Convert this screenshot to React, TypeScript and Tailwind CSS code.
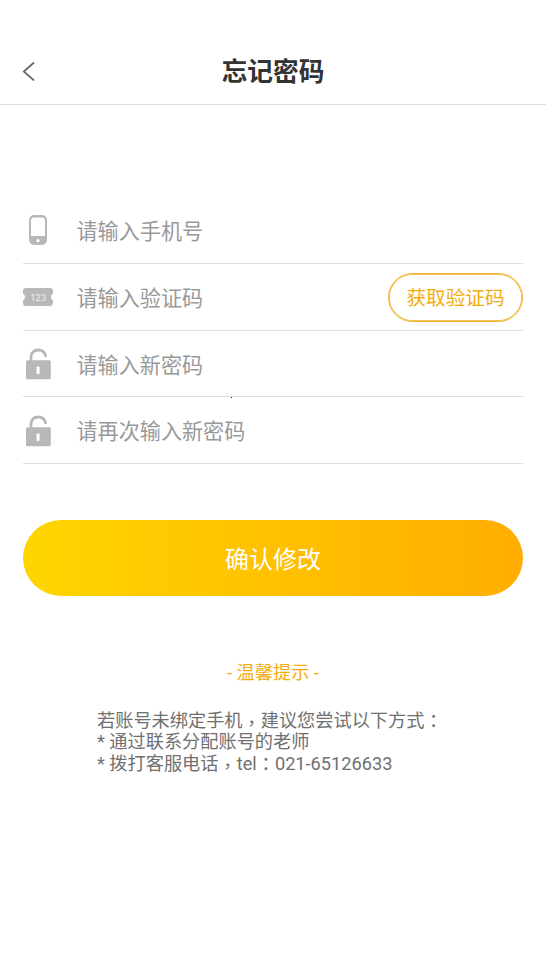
import React from "react";

function PhoneIcon() {
  return (
    <svg width="30" height="32" viewBox="0 0 30 32" className="block">
      <path fillRule="evenodd" d="M11 1h8a5 5 0 0 1 5 5v20a5 5 0 0 1-5 5h-8a5 5 0 0 1-5-5V6a5 5 0 0 1 5-5zM11 3.500a3 3 0 0 0-3 3V22h14V6.500a3 3 0 0 0-3-3z" fill="#b8b8b8" />
      <circle cx="15" cy="26.700" r="1.700" fill="white" />
    </svg>
  );
}

function CodeIcon() {
  return (
    <svg width="30" height="18" viewBox="0 0 30 18" className="block">
      <path d="M3 0h24a3 3 0 0 1 3 3v2.500q-2 1-2 3.500t2 3.500V15a3 3 0 0 1-3 3H3a3 3 0 0 1-3-3v-2.500q2-1 2-3.500T0 5.500V3a3 3 0 0 1 3-3z" fill="#b8b8b8" />
      <text x="15.300" y="12.700" textAnchor="middle" fontSize="9.500" fontFamily="Roboto, sans-serif" fill="#eeeeee">123</text>
    </svg>
  );
}

function LockIcon() {
  return (
    <svg width="30" height="32" viewBox="0 0 30 32" className="mt-px block">
      <path d="M8 13V9.500C8 4.800 11 2 15.200 2c3.800 0 6.600 2.300 7.400 6" fill="none" stroke="#b8b8b8" strokeWidth="2.800" strokeLinecap="round" />
      <rect x="3" y="12.300" width="24.800" height="19" rx="1.500" fill="#b8b8b8" />
      <rect x="13.600" y="18.500" width="3" height="7.500" rx="0.800" fill="white" />
    </svg>
  );
}

function Field({ icon, label, action }: { icon: React.ReactNode; label: string; action?: React.ReactNode }) {
  return (
    <div className="flex h-full items-center border-b border-[#dedede]">
      <span className="flex w-[30px] justify-center">{icon}</span>
      <span className="ml-[23.500px] flex-1 pt-[4px] text-[21.100px] text-[#999]">{label}</span>
      {action}
    </div>
  );
}

function Comma() {
  return <span lang="zh-TW" className="relative top-[3px] font-['Noto_Sans_CJK_TC',sans-serif] leading-none">，</span>;
}

function Colon() {
  return <span lang="zh-TW" className="relative top-px font-['Noto_Sans_CJK_TC',sans-serif] leading-none">：</span>;
}

export default function App() {
  return (
    <div className="h-[972px] w-[546px] overflow-hidden bg-white font-['Roboto','Noto_Sans_CJK_SC',sans-serif]">
      <header className="grid h-[105px] grid-cols-[60px_1fr_60px] items-center border-b border-[#dedede] pt-[38px]">
        <svg width="14" height="20" viewBox="0 0 14 20" className="ml-[22px]">
          <path d="M12 1.500 1.800 10.500 12 19.500" fill="none" stroke="#666" strokeWidth="1.700" />
        </svg>
        <h1 className="pt-[3px] text-center text-[25.700px] font-bold text-[#333]">忘记密码</h1>
      </header>
      <main className="px-[23px] pt-[92px]">
        <div className="grid grid-rows-[67px_67px_66px_67px]">
          <Field icon={<PhoneIcon />} label="请输入手机号" />
          <Field
            icon={<CodeIcon />}
            label="请输入验证码"
            action={
              <button className="h-[49px] w-[135px] rounded-full border border-[#efb32b] pt-[3px] text-[19.600px] text-[#f3ad0c] shadow-[inset_0_0_0_0.700px_#efb32b]">
                获取验证码
              </button>
            }
          />
          <div className="relative">
            <Field icon={<LockIcon />} label="请输入新密码" />
            <span className="absolute bottom-[-1px] left-[208px] size-px bg-[#222]" />
          </div>
          <Field icon={<LockIcon />} label="请再次输入新密码" />
        </div>
        <button className="mt-14 block h-[76px] w-full rounded-full bg-linear-to-r from-[#ffd500] to-[#ffad00] pt-[4px] text-2xl text-white">确认修改</button>
        <div className="mt-[63px] text-center text-[18.200px] leading-[27px] text-[#f3ad0c]">- 温馨提示 -</div>
        <div className="mt-[24px] ml-[74px] text-[18.200px] leading-[21.300px] whitespace-nowrap text-[#707070]">
          <p className="h-[21.300px]">若账号未绑定手机<Comma />建议您尝试以下方式<Colon /></p>
          <p className="h-[21.300px]">* 通过联系分配账号的老师</p>
          <p className="h-[21.300px]">* 拨打客服电话<Comma />tel<Colon />021-65126633</p>
        </div>
      </main>
    </div>
  );
}
